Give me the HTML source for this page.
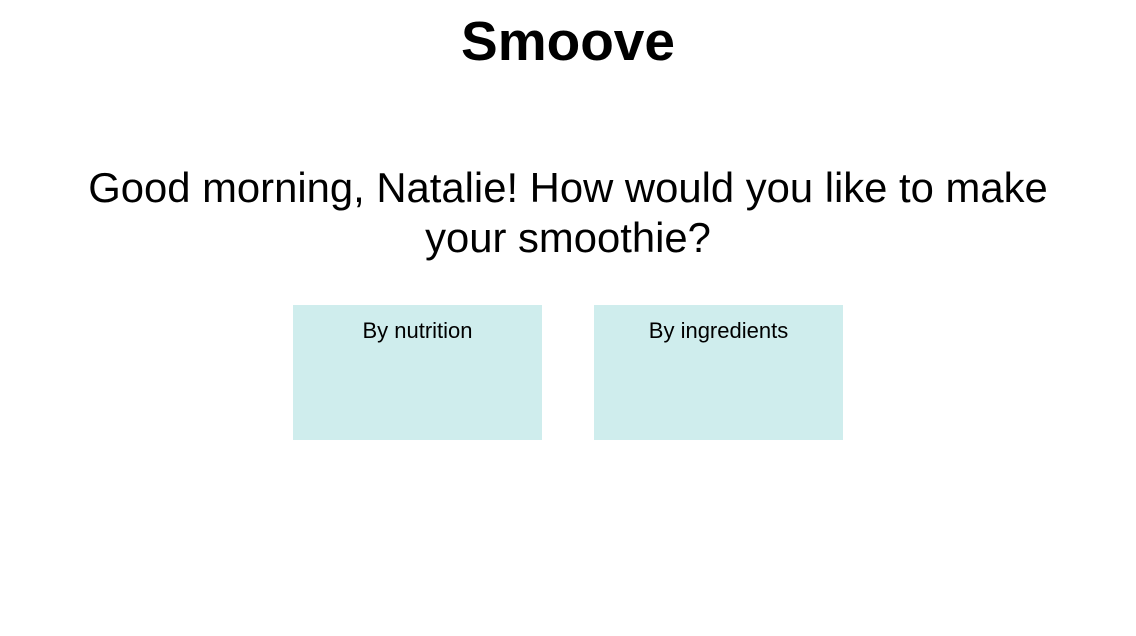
<!DOCTYPE html>
<html><head><meta charset="utf-8"><style>
html,body{margin:0;padding:0;background:#fff;width:1136px;height:636px;overflow:hidden;font-family:"Liberation Sans",Arial,sans-serif;color:#000}
h1{position:absolute;top:11px;left:0;width:1136px;text-align:center;margin:0;font-size:55px;font-weight:bold;line-height:60px}
.q{position:absolute;top:163px;left:60px;width:1016px;text-align:center;font-size:41.8px;line-height:50px}
.box{position:absolute;top:305px;width:249px;height:135px;background:#cfeded;text-align:center;font-size:22px;padding-top:13px;box-sizing:border-box}
</style></head><body>
<h1>Smoove</h1>
<div class="q">Good morning, Natalie! How would you like to make your smoothie?</div>
<div class="box" style="left:293px">By nutrition</div>
<div class="box" style="left:594px">By ingredients</div>
</body></html>
